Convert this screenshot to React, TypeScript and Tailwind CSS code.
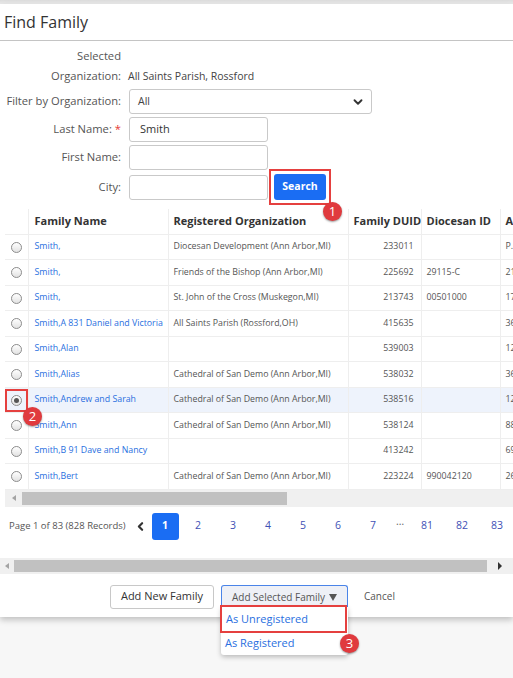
import { ChevronDown, ChevronLeft } from 'lucide-react'

type Row = {
  name: string
  org: string
  duid: string
  dioc: string
  addr: string
  selected?: boolean
}

const rows: Row[] = [
  { name: 'Smith,', org: 'Diocesan Development (Ann Arbor,MI)', duid: '233011', dioc: '', addr: 'P.O. Box' },
  { name: 'Smith,', org: 'Friends of the Bishop (Ann Arbor,MI)', duid: '225692', dioc: '29115-C', addr: '21 Main' },
  { name: 'Smith,', org: 'St. John of the Cross (Muskegon,MI)', duid: '213743', dioc: '00501000', addr: '17 Oak' },
  { name: 'Smith,A 831 Daniel and Victoria', org: 'All Saints Parish (Rossford,OH)', duid: '415635', dioc: '', addr: '36 Elm' },
  { name: 'Smith,Alan', org: '', duid: '539003', dioc: '', addr: '12 Pine' },
  { name: 'Smith,Alias', org: 'Cathedral of San Demo (Ann Arbor,MI)', duid: '538032', dioc: '', addr: '36 Elm' },
  { name: 'Smith,Andrew and Sarah', org: 'Cathedral of San Demo (Ann Arbor,MI)', duid: '538516', dioc: '', addr: '12 Pine', selected: true },
  { name: 'Smith,Ann', org: 'Cathedral of San Demo (Ann Arbor,MI)', duid: '538124', dioc: '', addr: '88 Lake' },
  { name: 'Smith,B 91 Dave and Nancy', org: '', duid: '413242', dioc: '', addr: '69 Hill' },
  { name: 'Smith,Bert', org: 'Cathedral of San Demo (Ann Arbor,MI)', duid: '223224', dioc: '990042120', addr: '26 Park' },
]

const pages = ['2', '3', '4', '5', '6', '7']

function Badge({ n, className }: { n: string; className: string }) {
  return (
    <div
      className={`absolute w-[19px] h-[19px] rounded-full bg-[#e03a3e] text-white text-[13px] leading-none flex items-center justify-center shadow-[0_1px_2px_rgba(0,0,0,0.4)] ${className}`}
    >
      {n}
    </div>
  )
}

function Radio({ checked }: { checked?: boolean }) {
  return (
    <span className="inline-flex w-[11px] h-[11px] rounded-full border border-[#8d8d8d] bg-gradient-to-b from-white to-[#e2e2e2] items-center justify-center">
      {checked && <span className="w-[5px] h-[5px] rounded-full bg-[#555]" />}
    </span>
  )
}

function FormRow({ label, children, required }: { label: React.ReactNode; children: React.ReactNode; required?: boolean }) {
  return (
    <div className="flex items-center">
      <div className="w-[122px] text-right text-[#555] pr-[1px] whitespace-nowrap">
        {label}
        {required && <span className="text-[#e53935] ml-[3px]">*</span>}
      </div>
      <div className="ml-[7px] flex items-center">{children}</div>
    </div>
  )
}

export default function App() {
  return (
    <div
      className="relative w-[513px] h-[678px] overflow-hidden bg-[#f7f7f7] pt-[4px]"
      style={{ fontFamily: '"Open Sans", "Noto Sans", sans-serif' }}
    >
      <div className="absolute top-0 left-0 right-0 h-[4px] bg-gradient-to-b from-[#dcdcdc] to-[#ececec]" />
      <div className="relative bg-white h-[613px] shadow-[0_3px_6px_rgba(0,0,0,0.22)] text-[11.2px]">
        <div className="h-[37px] flex items-center px-[4px] border-b border-[#c4c4c4] text-[16px] text-[#333]">
          Find Family
        </div>

        <div className="pt-[5px] flex flex-col gap-[3px]">
          <div className="flex items-end leading-[20px]">
            <div className="w-[122px] text-right text-[#555] pr-[1px]">
              Selected
              <br />
              Organization:
            </div>
            <div className="ml-[6px] text-[#444] text-[10.5px]">All Saints Parish, Rossford</div>
          </div>
          <FormRow label="Filter by Organization:">
            <div className="w-[243px] h-[25px] border border-[#c9c9c9] rounded-[3px] flex items-center justify-between pl-[8px] pr-[6px] text-[#444] text-[10.5px]">
              All
              <ChevronDown size={14} strokeWidth={3.2} className="text-[#333]" />
            </div>
          </FormRow>
          <FormRow label="Last Name:" required>
            <div className="w-[139px] h-[25px] border border-[#c9c9c9] rounded-[3px] flex items-center pl-[10px] text-[#333] text-[11px]">
              Smith
            </div>
          </FormRow>
          <FormRow label="First Name:">
            <div className="w-[139px] h-[25px] border border-[#c9c9c9] rounded-[3px]" />
          </FormRow>
          <div className="mt-[1px]">
            <FormRow label="City:">
              <div className="w-[139px] h-[25px] border border-[#c9c9c9] rounded-[3px]" />
              <span className="ml-[1px] p-[3px] border-2 border-[#e5403f] -my-[5px] flex">
                <button className="w-[52px] h-[26px] rounded-[3px] bg-[#1a6df3] text-white text-[10.5px] font-bold">
                  Search
                </button>
              </span>
            </FormRow>
          </div>
        </div>

        <Badge n="1" className="left-[323px] top-[198px]" />

        <div className="mt-[9px] ml-[5px] overflow-hidden">
          <table className="border-collapse table-fixed w-[620px] text-[8.8px]">
            <colgroup>
              <col className="w-[23px]" />
              <col className="w-[140px]" />
              <col className="w-[180px]" />
              <col className="w-[73px]" />
              <col className="w-[79px]" />
              <col className="w-[125px]" />
            </colgroup>
            <thead>
              <tr className="h-[25px] text-[11px] font-bold text-[#333] text-left">
                <th className="border-b border-[#eee]" />
                <th className="pl-[6px] border-l border-b border-[#eee]">Family Name</th>
                <th className="pl-[5px] border-l border-b border-[#eee]">Registered Organization</th>
                <th className="pl-[5px] border-l border-b border-[#eee] whitespace-nowrap overflow-hidden">Family DUID</th>
                <th className="pl-[5px] border-l border-b border-[#eee] whitespace-nowrap">Diocesan ID</th>
                <th className="pl-[5px] border-l border-b border-[#eee] whitespace-nowrap">Address</th>
              </tr>
            </thead>
            <tbody>
              {rows.map((r, i) => (
                <tr key={i} className={`h-[25.5px] ${r.selected ? 'bg-[#eef3fc]' : ''}`}>
                  <td className="text-center border-b border-[#eee]">
                    <div className="flex justify-center pt-[1px]">
                      <span className={r.selected ? 'outline-2 outline-[#e5403f] outline-offset-[4px] inline-flex' : 'inline-flex'}>
                        <Radio checked={r.selected} />
                      </span>
                    </div>
                  </td>
                  <td className="pl-[6px] border-l border-b border-[#eee] text-[#2a6fe0] whitespace-nowrap">{r.name}</td>
                  <td className="pl-[5px] border-l border-b border-[#eee] text-[#555] whitespace-nowrap">{r.org}</td>
                  <td className="pr-[7px] text-right border-l border-b border-[#eee] text-[#555]">{r.duid}</td>
                  <td className="pl-[5px] border-l border-b border-[#eee] text-[#555]">{r.dioc}</td>
                  <td className="pl-[5px] border-l border-b border-[#eee] text-[#555] whitespace-nowrap">{r.addr}</td>
                </tr>
              ))}
            </tbody>
          </table>
          <div className="h-[17px] bg-[#f0f0f0] flex items-center">
            <span className="w-[17px] flex justify-center">
              <span className="w-0 h-0 border-y-[3px] border-y-transparent border-r-[4px] border-r-[#a3a3a3]" />
            </span>
            <span className="w-[265px] h-[13px] bg-[#c1c1c1]" />
          </div>
        </div>

        <Badge n="2" className="left-[23px] top-[403px]" />

        <div className="h-[51px] flex items-start pt-[6px] text-[9.5px]">
          <div className="h-[27px] flex items-center shrink-0">
            <span className="ml-[9px] text-[#555] whitespace-nowrap">Page 1 of 83 (828 Records)</span>
            <ChevronLeft size={13} strokeWidth={4} className="ml-[8px] text-[#333]" />
          </div>
          <span className="ml-[5px] shrink-0 w-[27px] h-[27px] rounded-[3px] bg-[#1a6df3] text-white font-bold text-[10.5px] flex items-center justify-center">
            1
          </span>
          <div className="h-[27px] flex items-center text-[#3f51b5] text-[10.5px] shrink-0">
            {pages.map((p) => (
              <span key={p} className="w-[35px] text-center first:ml-[2px]">
                {p}
              </span>
            ))}
            <span className="w-[19px] text-center -mt-[9px] text-[#666]">…</span>
            {['81', '82', '83'].map((p) => (
              <span key={p} className="w-[35px] text-center">
                {p}
              </span>
            ))}
          </div>
        </div>

        <div className="h-[16px] bg-[#f0f0f0] flex items-center">
          <span className="w-[14px] flex justify-center">
            <span className="w-0 h-0 border-y-[3px] border-y-transparent border-r-[4px] border-r-[#a3a3a3]" />
          </span>
          <span className="w-[473px] h-[12px] bg-[#c1c1c1]" />
          <span className="flex-1 flex justify-center">
            <span className="w-0 h-0 border-y-[4px] border-y-transparent border-l-[4px] border-l-[#333]" />
          </span>
        </div>

        <div className="h-[45px] flex items-start pt-[11px] pl-[110px] text-[10.5px]">
          <button className="h-[24px] w-[104px] rounded-[3px] border border-[#c8c8c8] bg-white text-[#333] text-[11px]">
            Add New Family
          </button>
          <button className="ml-[7px] h-[24px] w-[127px] rounded-t-[3px] border border-b-0 border-[#4a84e8] bg-[#eef0f6] text-[#555] text-[10px] flex items-center justify-center gap-[2px]">
            Add Selected Family
            <span className="w-0 h-0 border-x-[4px] border-x-transparent border-t-[7px] border-t-[#555] ml-[2px]" />
          </button>
          <button className="ml-[16px] h-[24px] text-[#555] text-[10px]">Cancel</button>
        </div>
      </div>

      <div className="absolute left-[221px] top-[607px] w-[127px] bg-white rounded-b-[3px] shadow-[0_2px_5px_rgba(0,0,0,0.25)] text-[11px] text-[#2a6fe0]">
        <div className="h-[24px] flex items-center pl-[4px] outline-2 outline-[#e5403f] mx-[2px] -translate-x-[1px]">As Unregistered</div>
        <div className="h-[24px] flex items-center pl-[4px]">As Registered</div>
      </div>
      <Badge n="3" className="left-[340px] top-[634px]" />
    </div>
  )
}
